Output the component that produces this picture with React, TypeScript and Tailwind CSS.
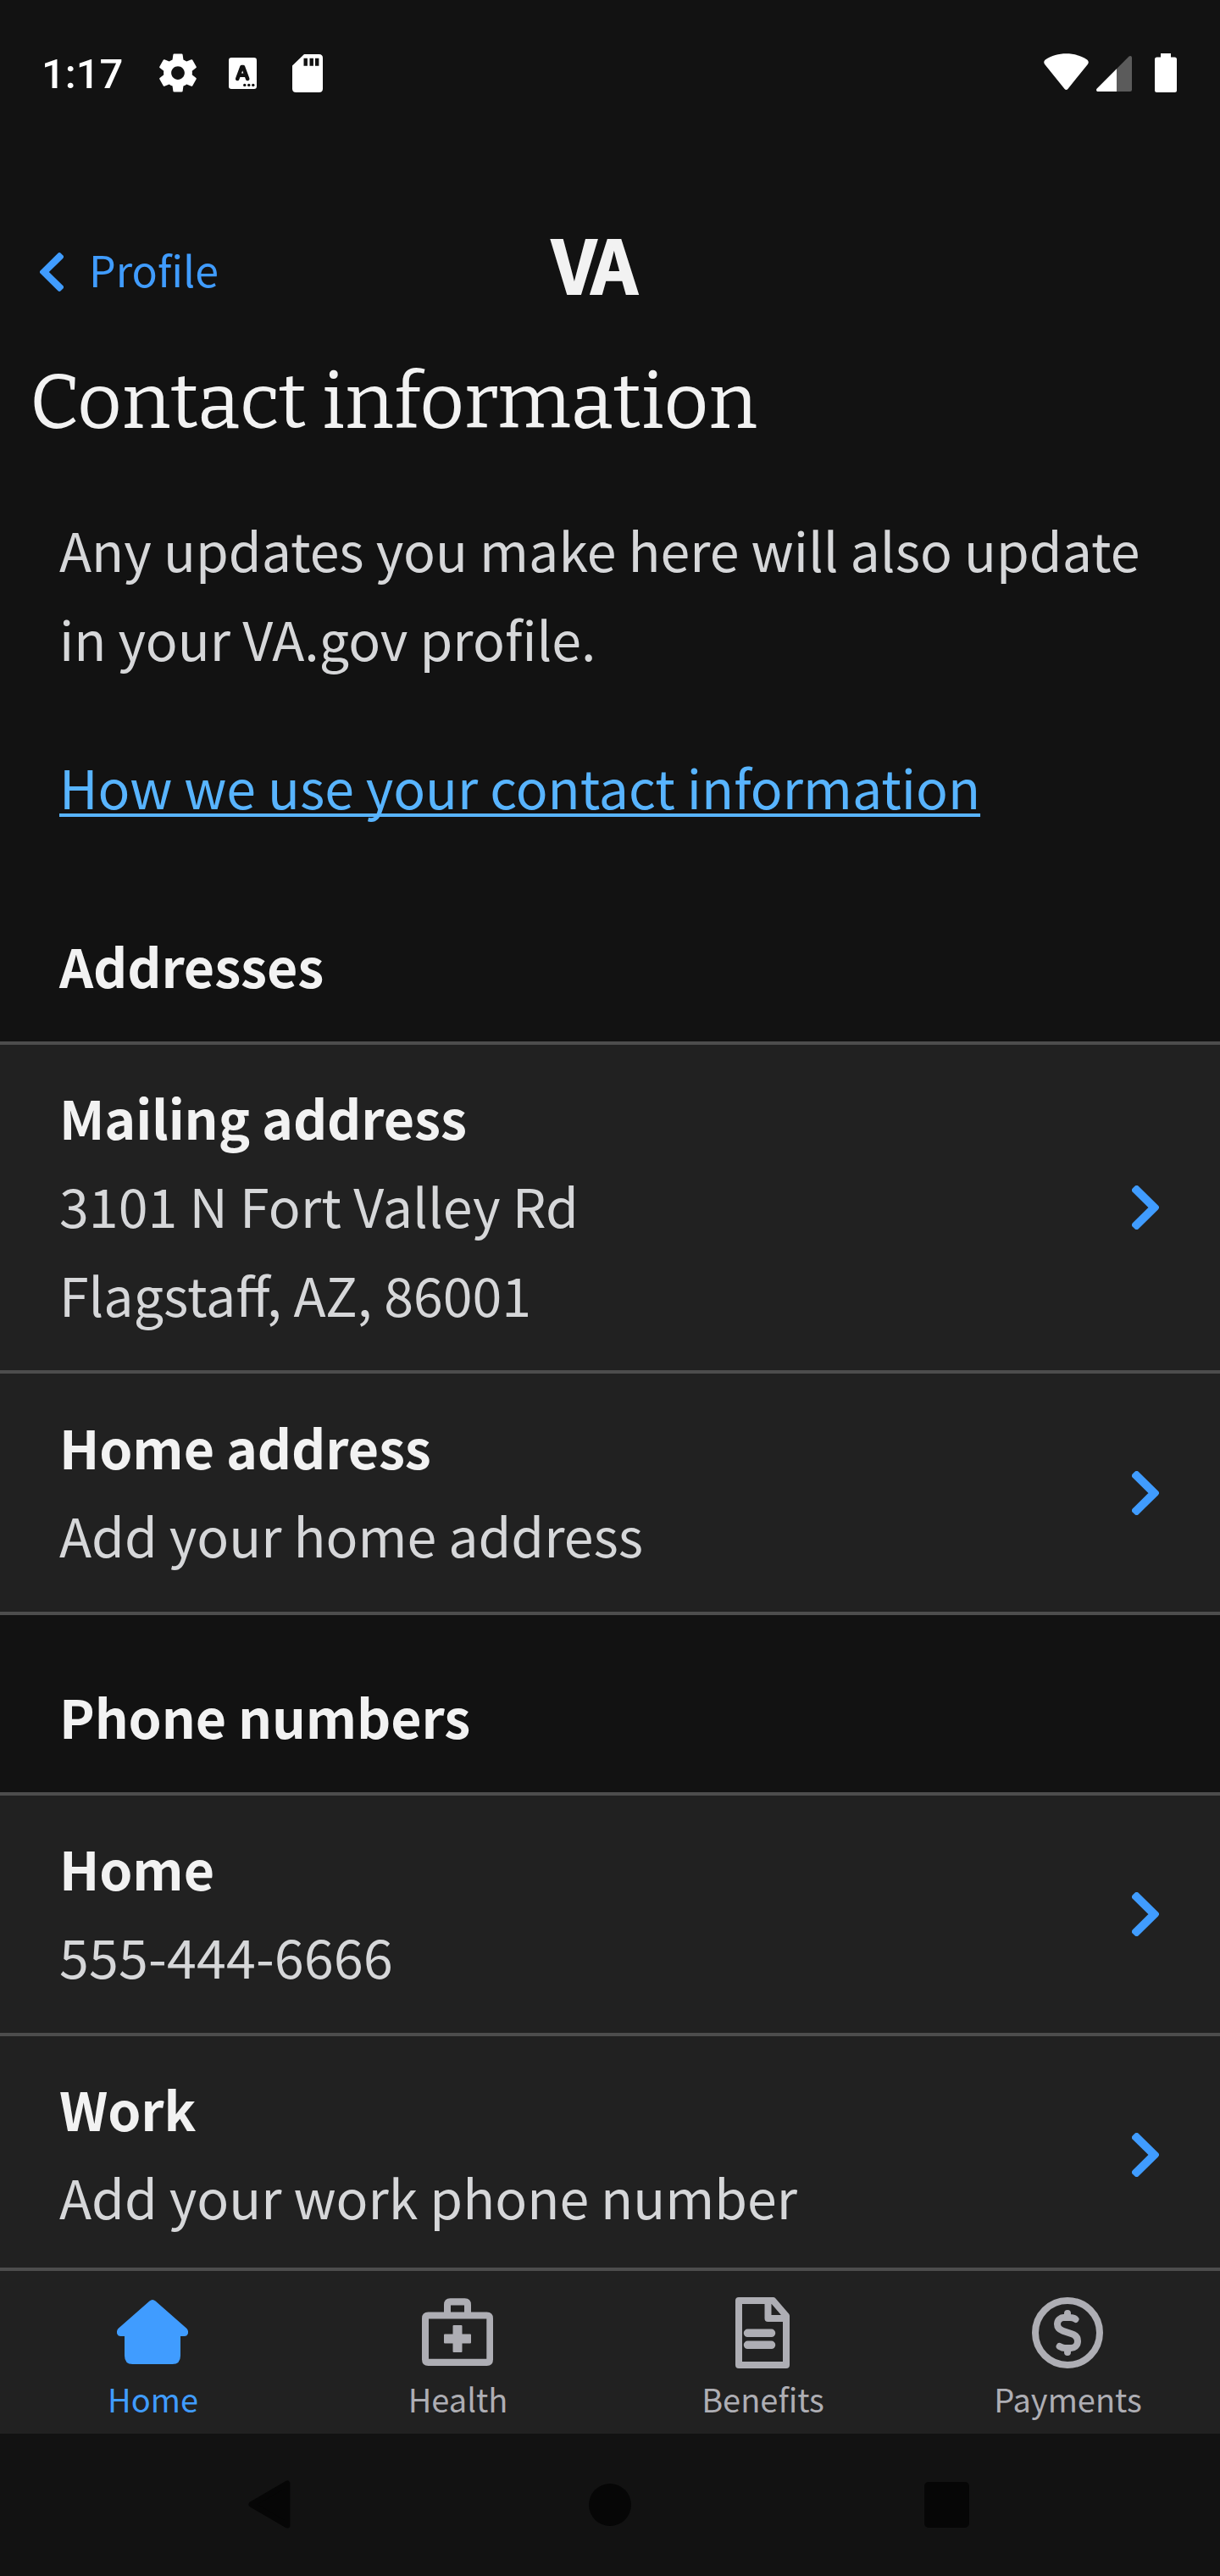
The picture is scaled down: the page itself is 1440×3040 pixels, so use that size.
import type { ReactNode } from "react";

type Line = { text: string; spacing?: string };
type Row = { title: string; lines: Line[]; padding: string };

const ADDRESSES: Row[] = [
  {
    title: "Mailing address",
    lines: [{ text: "3101 N Fort Valley Rd", spacing: "tracking-[0.1px]" }, { text: "Flagstaff, AZ, 86001" }],
    padding: "pt-[32px] pb-[38px]",
  },
  { title: "Home address", lines: [{ text: "Add your home address" }], padding: "pt-[33px] pb-[39px]" },
];

const PHONES: Row[] = [
  { title: "Home", lines: [{ text: "555-444-6666", spacing: "tracking-[0.25px]" }], padding: "pt-[32px] pb-[39px]" },
  { title: "Work", lines: [{ text: "Add your work phone number" }], padding: "pt-[32px] pb-[39px]" },
];

function Chevron({ className }: { className: string }) {
  return (
    <svg viewBox="0 0 32 52" className={className} fill="currentColor" stroke="currentColor" strokeWidth="6" strokeLinejoin="round">
      <path d="M5.6 3 L29 26 L5.6 49 L3 46.5 L23.8 26 L3 5.5 Z" />
    </svg>
  );
}

function StatusBar() {
  return (
    <div className="flex h-[247px] items-start justify-between pl-[49px] pr-[51px] pt-[59px] text-white">
      <div className="flex h-[54px] items-center">
        <span className="mt-[3px] w-[134px] font-['Roboto'] text-[49px] font-medium leading-[58px]">1:17</span>
        <svg viewBox="0 0 24 24" className="h-[54px] w-[54px]" fill="currentColor">
          <path d="M19.43 12.98c.04-.32.07-.64.07-.98s-.03-.66-.07-.98l2.11-1.65c.19-.15.24-.42.12-.64l-2-3.46c-.12-.22-.39-.3-.61-.22l-2.49 1c-.52-.4-1.08-.73-1.69-.98l-.38-2.65C14.46 2.18 14.25 2 14 2h-4c-.25 0-.46.18-.49.42l-.38 2.65c-.61.25-1.17.59-1.69.98l-2.49-1c-.23-.09-.49 0-.61.22l-2 3.46c-.13.22-.07.49.12.64l2.11 1.65c-.04.32-.07.65-.07.98s.03.66.07.98l-2.11 1.65c-.19.15-.24.42-.12.64l2 3.46c.12.22.39.3.61.22l2.49-1c.52.4 1.08.73 1.69.98l.38 2.65c.03.24.24.42.49.42h4c.25 0 .46-.18.49-.42l.38-2.65c.61-.25 1.17-.59 1.69-.98l2.49 1c.23.09.49 0 .61-.22l2-3.46c.12-.22.07-.49-.12-.64l-2.11-1.65zM12 15.5c-1.93 0-3.5-1.57-3.5-3.5s1.57-3.5 3.5-3.5 3.5 1.57 3.5 3.5-1.57 3.5-3.5 3.5z" />
        </svg>
        <svg viewBox="0 0 33 37" className="ml-[33px] h-[37px] w-[33px]">
          <rect width="33" height="37" rx="3.2" fill="#fff" />
          <path d="M10.2 25 L15.4 11 h1.6 L22.2 25 M12.6 20.8 h7.4" fill="none" stroke="#121212" strokeWidth="4.6" strokeLinecap="round" strokeLinejoin="round" />
          <g fill="#121212">
            <circle cx="18.8" cy="32.4" r="1.7" />
            <circle cx="23.8" cy="32.4" r="1.7" />
            <circle cx="28.8" cy="32.4" r="1.7" />
          </g>
        </svg>
        <svg viewBox="0 0 36 45" className="ml-[42px] h-[45px] w-[36px]">
          <path d="M14 0 H31.5 Q36 0 36 4.5 V40.5 Q36 45 31.5 45 H4.5 Q0 45 0 40.5 V13.5 Z" fill="#fff" />
          <path d="M13.5 4.8h4.4v9h-4.4z M20.5 4.8h4.4v9h-4.4z M27 4.8h4.4v9H27z" fill="#121212" />
        </svg>
      </div>
      <div className="flex h-[54px] items-center">
        <svg viewBox="0 0 53 54" className="h-[54px] w-[53px]" fill="currentColor">
          <path d="M1.2 17 C-.3 15.2 0 12.8 1.8 11.4 C16.5 2 36.5 2 51.2 11.4 C53 12.8 53.3 15.2 51.8 17 L28.4 46 C27.4 47.2 25.6 47.2 24.6 46 Z" />
        </svg>
        <svg viewBox="0 0 42 54" className="ml-[9px] h-[54px] w-[42px]">
          <path d="M38.6 7.6 L.8 45.6 C-.6 47 .2 49 2.2 49 H40 Q42 49 42 47 V9 C42 7 40 6.2 38.6 7.6 Z" fill="#5b5b5b" />
          <path d="M24 22.3 L.8 45.6 C-.6 47 .2 49 2.2 49 H24 Z" fill="#fff" />
        </svg>
        <svg viewBox="0 0 26 54" className="ml-[27px] h-[54px] w-[26px]" fill="currentColor">
          <path d="M7 4 H19 V8.5 H23.5 Q26 8.5 26 11 V47.5 Q26 50 23.5 50 H2.5 Q0 50 0 47.5 V11 Q0 8.5 2.5 8.5 H7 Z" />
        </svg>
      </div>
    </div>
  );
}

function Header() {
  return (
    <header className="flex h-[126px] items-start pl-[47px]">
      <button className="mt-[34px] flex w-[604px] items-center text-[#409cff]">
        <Chevron className="mt-2 h-[46px] w-[28px] -scale-x-100" />
        <span className="ml-[30px] text-[50.1px] leading-[72px]">Profile</span>
      </button>
      <span className="text-[86px] font-bold leading-[126px] tracking-[-5px] text-[#f2f2f2] [-webkit-text-stroke:1.8px_#f2f2f2]">VA</span>
    </header>
  );
}

function SectionTitle({ children }: { children: ReactNode }) {
  return <h2 className="pb-[38px] pl-[70px] pt-[66px] font-bold leading-[105px] tracking-[-0.13px] text-[#f2f2f2]">{children}</h2>;
}

function List({ rows }: { rows: Row[] }) {
  return (
    <ul className="border-t-4 border-[#4d4d4d] bg-[#212121]">
      {rows.map((r) => (
        <li key={r.title} className="flex items-center justify-between border-b-4 border-[#4d4d4d] pl-[70px] pr-[72px] leading-[105px]">
          <div className={r.padding}>
            <p className="-mb-px font-bold tracking-[-0.13px] text-[#f2f2f2]">{r.title}</p>
            {r.lines.map((l) => (
              <p key={l.text} className={l.spacing}>
                {l.text}
              </p>
            ))}
          </div>
          <Chevron className="h-[52px] w-[32px] text-[#409cff]" />
        </li>
      ))}
    </ul>
  );
}

const HomeIcon = (
  <path
    fill="currentColor"
    d="M38.5 4.5 Q42 1.5 45.5 4.5 L82.5 37 Q84.5 39.5 84 42.5 Q83 46 79.5 46 H75 V69 Q75 79 65.5 79 H18.5 Q9 79 9 69 V46 H4.5 Q1 46 0 42.5 Q-.5 39.5 1.5 37 Z"
  />
);

const HealthIcon = (
  <>
    <path
      fill="currentColor"
      fillRule="evenodd"
      d="M26 17.5 V9 Q26 1.2 33.5 1.2 H50.5 Q58 1.2 58 9 V17.5 H76.5 Q84 17.5 84 25 V73.5 Q84 81 76.5 81 H7.5 Q0 81 0 73.5 V25 Q0 17.5 7.5 17.5 Z M34 9.5 V17.5 H50 V9.5 Z M8 25.5 V72.8 H76.3 V25.5 Z"
    />
    <path
      fill="currentColor"
      d="M37.5 33 H46.5 Q47.5 33 47.5 34 V43.5 H57 Q58 43.5 58 44.5 V53.5 Q58 54.5 57 54.5 H47.5 V64 Q47.5 65 46.5 65 H37.5 Q36.5 65 36.5 64 V54.5 H27 Q26 54.5 26 53.5 V44.5 Q26 43.5 27 43.5 H36.5 V34 Q36.5 33 37.5 33 Z"
    />
  </>
);

const BenefitsIcon = (
  <>
    <path fill="none" stroke="currentColor" strokeWidth="8" strokeLinejoin="round" d="M14 4 H54.5 L70 22 V80 H14 Z M48.5 4 V25 H70" />
    <path stroke="currentColor" strokeWidth="9.5" strokeLinecap="round" d="M24.5 42.3 H52.5 M24.5 56.3 H52.5" />
  </>
);

const PaymentsIcon = (
  <g fill="none" stroke="currentColor" strokeWidth="8">
    <circle cx="42" cy="42" r="38" />
    <path
      strokeLinecap="round"
      strokeLinejoin="round"
      d="M51.5 26 Q49 24 45 24 H38 A7.8 7.8 0 0 0 30 31.8 C30 36 32.5 38.3 36.5 39.7 L47 43.2 C51.5 44.7 54 47.5 54 52 A8 8 0 0 1 46 60 H39 Q36 60 32.6 58 M42 19 V23 M42 61 V65"
    />
  </g>
);

const TABS: { label: string; icon: ReactNode; active?: boolean }[] = [
  { label: "Home", icon: HomeIcon, active: true },
  { label: "Health", icon: HealthIcon },
  { label: "Benefits", icon: BenefitsIcon },
  { label: "Payments", icon: PaymentsIcon },
];

function TabBar() {
  return (
    <nav className="grid h-[196px] grid-cols-4 border-t-4 border-[#4d4d4d] bg-[#212121] pt-[31px]">
      {TABS.map((t) => (
        <a key={t.label} className={t.active ? "flex flex-col items-center text-[#409cff]" : "flex flex-col items-center text-[#aeaeb4]"}>
          <svg viewBox="0 0 84 84" className="h-[84px] w-[84px]">
            {t.icon}
          </svg>
          <span className="mt-2 pl-px text-[38px] leading-[55px]">{t.label}</span>
        </a>
      ))}
    </nav>
  );
}

function SystemNav() {
  return (
    <div className="flex h-[168px] items-center pb-px pl-[293px] text-[#060606]">
      <svg viewBox="0 0 50 57" className="h-[57px] w-[50px]">
        <path d="M4 28.5 L46 4 V53 Z" fill="currentColor" stroke="currentColor" strokeWidth="7" strokeLinejoin="round" />
      </svg>
      <div className="ml-[352px] h-[50px] w-[50px] rounded-full bg-[#060606]" />
      <div className="ml-[346px] h-[54px] w-[53px] rounded-[5px] bg-[#060606]" />
    </div>
  );
}

export default function App() {
  return (
    <div className="flex h-[3040px] w-[1440px] flex-col overflow-hidden bg-[#121212] font-['Noto_Sans_CJK_SC',sans-serif] text-[62.65px] text-[#d6d7d9]">
      <StatusBar />
      <Header />
      <h1 className="mt-[47px] pl-[35px] font-['Bitter','Noto_Serif',serif] text-[91.1px] leading-[109px] text-[#f2f2f2]">Contact information</h1>
      <main className="h-0 grow overflow-hidden pt-[66px]">
        <div className="px-[70px] leading-[105px]">
          <p className="whitespace-nowrap">
            Any updates you make here will also update
            <br />
            in your VA.gov profile.
          </p>
          <a className="mb-[40px] mt-[70px] block whitespace-nowrap text-[62.55px] text-[#58b4ff] underline decoration-[4px] underline-offset-[5px] [text-decoration-skip-ink:none]">
            How we use your contact information
          </a>
        </div>
        <SectionTitle>Addresses</SectionTitle>
        <List rows={ADDRESSES} />
        <SectionTitle>Phone numbers</SectionTitle>
        <List rows={PHONES} />
      </main>
      <TabBar />
      <SystemNav />
    </div>
  );
}
